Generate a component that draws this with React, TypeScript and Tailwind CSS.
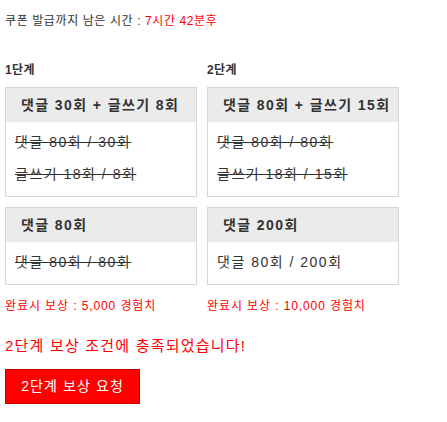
const font = { fontFamily: '"Liberation Sans", "Noto Sans CJK KR", sans-serif' };

type Stage = {
  label: string;
  title: string;
  lines: { text: string; done: boolean }[];
};

const stages: Stage[][] = [
  [
    {
      label: "1단계",
      title: "댓글 30회 + 글쓰기 8회",
      lines: [
        { text: "댓글 80회 / 30회", done: true },
        { text: "글쓰기 18회 / 8회", done: true },
      ],
    },
    {
      label: "",
      title: "댓글 80회",
      lines: [{ text: "댓글 80회 / 80회", done: true }],
    },
  ],
  [
    {
      label: "2단계",
      title: "댓글 80회 + 글쓰기 15회",
      lines: [
        { text: "댓글 80회 / 80회", done: true },
        { text: "글쓰기 18회 / 15회", done: true },
      ],
    },
    {
      label: "",
      title: "댓글 200회",
      lines: [{ text: "댓글 80회 / 200회", done: false }],
    },
  ],
];

const rewards = ["5,000", "10,000"];

function Box({ stage }: { stage: Stage }) {
  return (
    <div className="border border-[#d6d6d6] bg-white">
      <div className="flex h-[34px] items-center bg-[#ebebeb] pl-[15px] text-[14px] font-bold tracking-[1.4px] text-[#333]">
        {stage.title}
      </div>
      <div className="flex flex-col gap-[12px] px-[9px] pt-[10px] pb-[12px]">
        {stage.lines.map((l) => (
          <div
            key={l.text}
            className={`text-[14px] leading-[20px] tracking-[1.5px] text-[#333] ${l.done ? "line-through" : ""}`}
          >
            {l.text}
          </div>
        ))}
      </div>
    </div>
  );
}

export default function App() {
  return (
    <div className="min-h-screen bg-white px-[5px] pt-[13px]" style={font}>
      <div className="text-[12px] leading-[16px] tracking-[0.6px] text-[#333]">
        쿠폰 발급까지 남은 시간 : <span className="text-[#ff0000]">7시간 42분후</span>
      </div>

      <div className="mt-[33px] flex gap-[10px]">
        {stages.map((col, i) => (
          <div key={i} className="w-[192px]">
            <div className="mb-[9px] text-[12px] leading-[16px] font-bold tracking-[0.4px] text-[#333]">
              {col[0].label}
            </div>
            <Box stage={col[0]} />
            <div className="mt-[10px]">
              <Box stage={col[1]} />
            </div>
            <div className="mt-[13px] text-[12px] leading-[16px] tracking-[0.9px] text-[#ff0000]">
              완료시 보상 : {rewards[i]} 경험치
            </div>
          </div>
        ))}
      </div>

      <div className="mt-[22px] text-[15px] leading-[20px] tracking-[1.2px] text-[#ff0000]">
        2단계 보상 조건에 충족되었습니다!
      </div>
      <button
        type="button"
        className="mt-[13px] flex h-[35px] w-[135px] items-center justify-center border border-[#cc0000] bg-[#ff0000] text-[14px] tracking-[1.1px] text-white"
      >
        2단계 보상 요청
      </button>
    </div>
  );
}
